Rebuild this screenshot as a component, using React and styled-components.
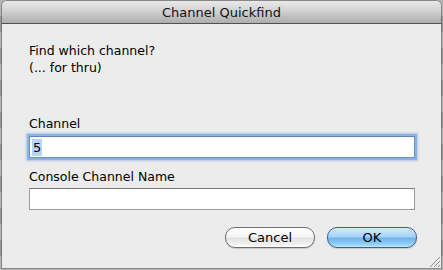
import React from "react";
import styled, { createGlobalStyle } from "styled-components";

const Global = createGlobalStyle`
  html, body { margin: 0; padding: 0; }
  body {
    width: 443px;
    height: 270px;
    overflow: hidden;
    background: repeating-linear-gradient(180deg, #b4b4b4 0 16px, #9a9a9a 16px 32px);
    font-family: "DejaVu Sans", "Liberation Sans", sans-serif;
  }
`;

const Desk = styled.div`
  padding: 1px 2px 0 2px;
  height: 270px;
  box-sizing: border-box;
`;

const Window = styled.div`
  width: 439px;
  height: 267px;
  background: #ececec;
  border-radius: 5px 5px 0 0;
  display: flex;
  flex-direction: column;
  box-shadow: 0 0 0 1px rgba(0,0,0,0.25);
  overflow: hidden;
  position: relative;
`;

const TitleBar = styled.div`
  height: 21px;
  flex: none;
  background: linear-gradient(180deg, #e9e9e9 0%, #d2d2d2 45%, #bdbdbd 75%, #aeaeae 100%);
  border-bottom: 1px solid #515151;
  display: flex;
  align-items: center;
  justify-content: center;
  font-size: 13px;
  color: #111;
  padding-top: 1px;
`;

const Body = styled.div`
  flex: 1;
  display: flex;
  flex-direction: column;
  padding: 18px 26px 0 27px;
  font-size: 12.5px;
  color: #000;
`;

const Prompt = styled.div`
  line-height: 17px;
  margin-bottom: 40px;
`;

const Label = styled.div`
  line-height: 16px;
  margin-top: ${p => p.$top || 0}px;
  margin-bottom: ${p => p.$bottom ?? 3}px;
`;

const Field = styled.div`
  height: 20px;
  background: #fff;
  border: 1px solid ${p => p.$focus ? "#6b8fbf" : "#9c9c9c"};
  border-top-color: ${p => p.$focus ? "#5c84b8" : "#7a7a7a"};
  box-shadow: ${p => p.$focus ? "0 0 0 2px #8ab4e6, 0 0 2px 3px rgba(120,165,225,0.5)" : "none"};
  display: flex;
  align-items: center;
  padding-left: 2px;
  font-size: 13px;
`;

const Selected = styled.span`
  background: #b5d5ff;
  line-height: 17px;
  padding: 0 1px;
`;

const Buttons = styled.div`
  display: flex;
  justify-content: flex-end;
  gap: 12px;
  margin-top: 17px;
  margin-right: -2px;
`;

const Button = styled.div`
  width: 88px;
  height: 19px;
  border-radius: 10px;
  border: 1px solid ${p => p.$primary ? "#3a5f99" : "#6e6e6e"};
  background: ${p => p.$primary
    ? "linear-gradient(180deg, #d6ebfb 0%, #a6d2f6 45%, #6fb4ef 55%, #8ed0fa 85%, #bfe9ff 100%)"
    : "linear-gradient(180deg, #ffffff 0%, #f4f4f4 45%, #e2e2e2 55%, #f1f1f1 85%, #ffffff 100%)"};
  display: flex;
  align-items: center;
  justify-content: center;
  font-size: 13px;
  color: #000;
  box-shadow: 0 1px 1px rgba(0,0,0,0.15);
`;

const Grip = styled.svg`
  position: absolute;
  right: 0;
  bottom: 0;
`;

export default function App() {
  return (
    <>
      <Global />
      <Desk>
        <Window>
          <TitleBar>Channel Quickfind</TitleBar>
          <Body>
            <Prompt>
              Find which channel?<br />(... for thru)
            </Prompt>
            <Label $bottom={4}>Channel</Label>
            <Field $focus><Selected>5</Selected></Field>
            <Label $top={11} $bottom={3}>Console Channel Name</Label>
            <Field />
            <Buttons>
              <Button>Cancel</Button>
              <Button $primary>OK</Button>
            </Buttons>
          </Body>
          <Grip width="14" height="14" viewBox="0 0 14 14">
            <line x1="3" y1="13" x2="13" y2="3" stroke="#8a8a8a" strokeWidth="1" />
            <line x1="7" y1="13" x2="13" y2="7" stroke="#8a8a8a" strokeWidth="1" />
            <line x1="11" y1="13" x2="13" y2="11" stroke="#8a8a8a" strokeWidth="1" />
          </Grip>
        </Window>
      </Desk>
    </>
  );
}
